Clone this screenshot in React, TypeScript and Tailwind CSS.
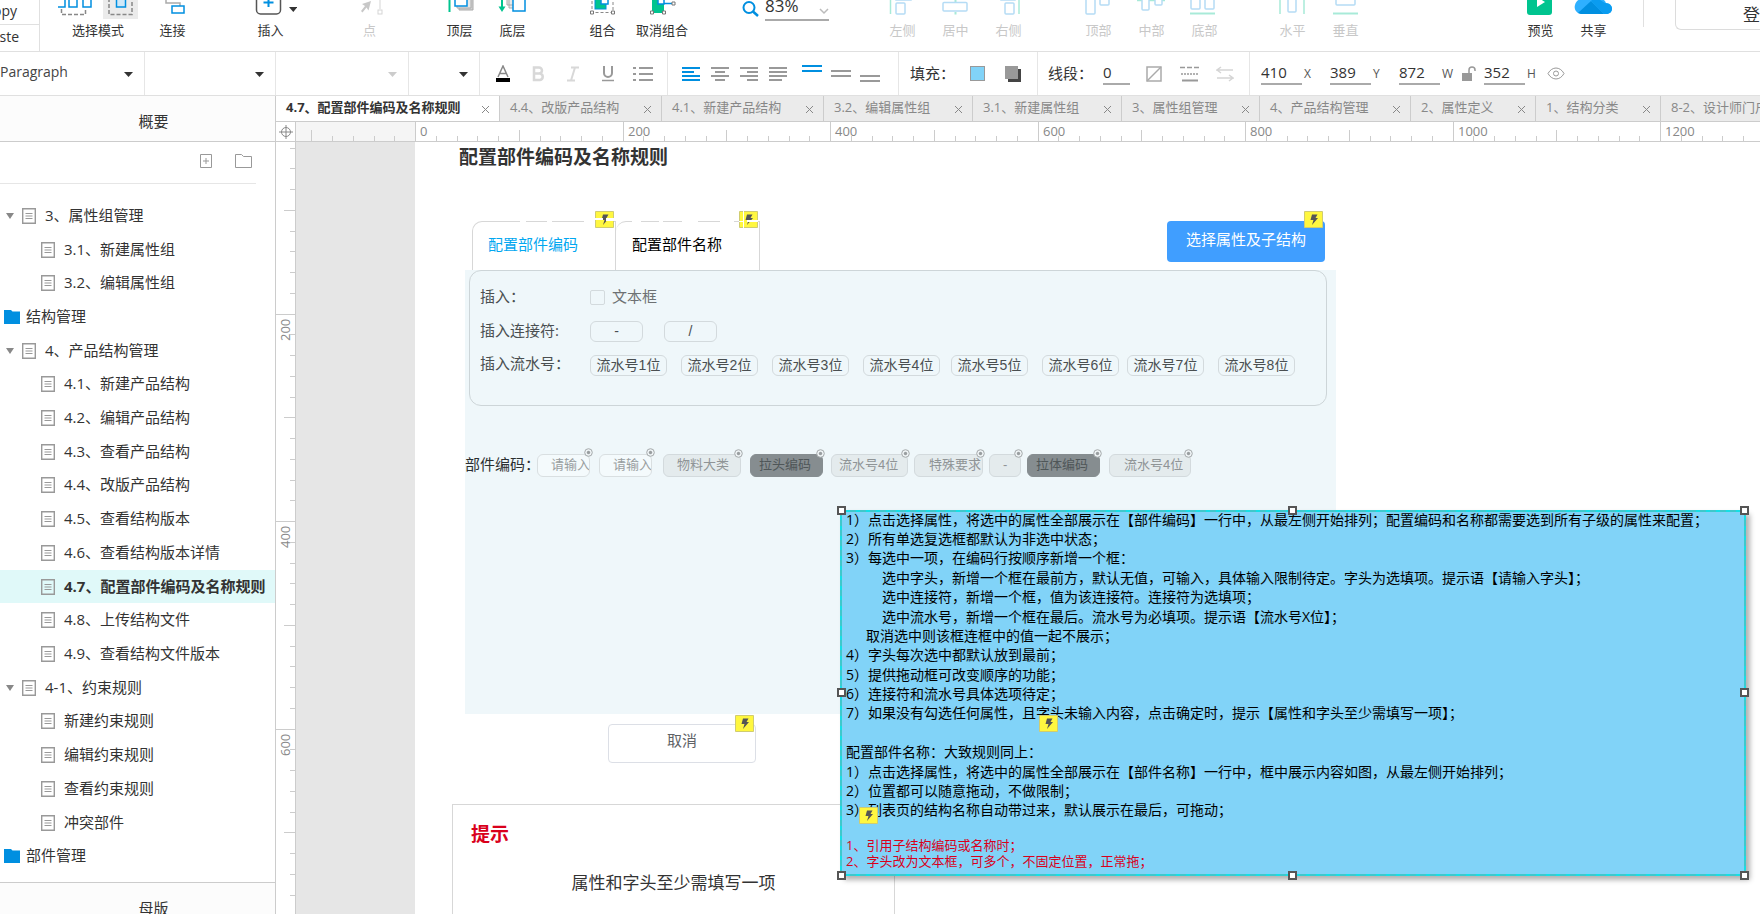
import type { ReactNode } from "react"
import { clsx } from "clsx"

type TreeItem = {
  label: string
  kind: "folder" | "parent" | "page"
  active?: boolean
}

const tree: TreeItem[] = [
  { label: "3、属性组管理", kind: "parent" },
  { label: "3.1、新建属性组", kind: "page" },
  { label: "3.2、编辑属性组", kind: "page" },
  { label: "结构管理", kind: "folder" },
  { label: "4、产品结构管理", kind: "parent" },
  { label: "4.1、新建产品结构", kind: "page" },
  { label: "4.2、编辑产品结构", kind: "page" },
  { label: "4.3、查看产品结构", kind: "page" },
  { label: "4.4、改版产品结构", kind: "page" },
  { label: "4.5、查看结构版本", kind: "page" },
  { label: "4.6、查看结构版本详情", kind: "page" },
  { label: "4.7、配置部件编码及名称规则", kind: "page", active: true },
  { label: "4.8、上传结构文件", kind: "page" },
  { label: "4.9、查看结构文件版本", kind: "page" },
  { label: "4-1、约束规则", kind: "parent" },
  { label: "新建约束规则", kind: "page" },
  { label: "编辑约束规则", kind: "page" },
  { label: "查看约束规则", kind: "page" },
  { label: "冲突部件", kind: "page" },
  { label: "部件管理", kind: "folder" },
]

const tabs = [
  { label: "4.7、配置部件编码及名称规则", width: "w-[224px]", active: true },
  { label: "4.4、改版产品结构", width: "w-[162px]" },
  { label: "4.1、新建产品结构", width: "w-[162px]" },
  { label: "3.2、编辑属性组", width: "w-[149px]" },
  { label: "3.1、新建属性组", width: "w-[149px]" },
  { label: "3、属性组管理", width: "w-[138px]" },
  { label: "4、产品结构管理", width: "w-[151px]" },
  { label: "2、属性定义", width: "w-[125px]" },
  { label: "1、结构分类", width: "w-[125px]" },
  { label: "8-2、设计师门户", width: "w-[175px]" },
]

const serials = [
  { label: "流水号1位", gap: "" },
  { label: "流水号2位", gap: "ml-[14px]" },
  { label: "流水号3位", gap: "ml-[14px]" },
  { label: "流水号4位", gap: "ml-[14px]" },
  { label: "流水号5位", gap: "ml-[11px]" },
  { label: "流水号6位", gap: "ml-[14px]" },
  { label: "流水号7位", gap: "ml-[8px]" },
  { label: "流水号8位", gap: "ml-[14px]" },
]

const chips = [
  { label: "物料大类", box: "ml-[11px] w-[78px] pl-[13px]" },
  { label: "拉头编码", box: "ml-[9px] w-[73px] pl-[8px]", dark: true },
  { label: "流水号4位", box: "ml-[8px] w-[77px] pl-[7px]" },
  { label: "特殊要求", box: "ml-[6px] w-[69px] pl-[14px]" },
  { label: "-", box: "ml-[6px] w-[32px] pl-[13px]" },
  { label: "拉体编码", box: "ml-[6px] w-[73px] pl-[8px]", dark: true },
  { label: "流水号4位", box: "ml-[9px] w-[82px] pl-[14px]" },
]

const noteLines = [
  { text: "1）点击选择属性，将选中的属性全部展示在【部件编码】一行中，从最左侧开始排列；配置编码和名称都需要选到所有子级的属性来配置；" },
  { text: "2）所有单选复选框都默认为非选中状态；" },
  { text: "3）每选中一项，在编码行按顺序新增一个框：" },
  { text: "选中字头，新增一个框在最前方，默认无值，可输入，具体输入限制待定。字头为选填项。提示语【请输入字头】；", indent: "pl-9" },
  { text: "选中连接符，新增一个框，值为该连接符。连接符为选填项；", indent: "pl-9" },
  { text: "选中流水号，新增一个框在最后。流水号为必填项。提示语【流水号X位】；", indent: "pl-9" },
  { text: "取消选中则该框连框中的值一起不展示；", indent: "pl-5" },
  { text: "4）字头每次选中都默认放到最前；" },
  { text: "5）提供拖动框可改变顺序的功能；" },
  { text: "6）连接符和流水号具体选项待定；" },
  { text: "7）如果没有勾选任何属性，且字头未输入内容，点击确定时，提示【属性和字头至少需填写一项】；" },
  { text: "" },
  { text: "配置部件名称：大致规则同上：" },
  { text: "1）点击选择属性，将选中的属性全部展示在【部件名称】一行中，框中展示内容如图，从最左侧开始排列；" },
  { text: "2）位置都可以随意拖动，不做限制；" },
  { text: "3）列表页的结构名称自动带过来，默认展示在最后，可拖动；" },
]

const handles = [
  "-left-[3px] -top-[4px]",
  "left-1/2 -ml-[5px] -top-[4px]",
  "-right-[3px] -top-[4px]",
  "-left-[3px] top-1/2 -mt-[5px]",
  "-right-[3px] top-1/2 -mt-[5px]",
  "-left-[3px] -bottom-[4px]",
  "left-1/2 -ml-[5px] -bottom-[4px]",
  "-right-[3px] -bottom-[4px]",
]

// one tick every 20 units at 83% zoom
const TICK = 20.75

function Tool({ label, muted, className = "w-[53px]", vw = 53, children }: {
  label: string
  muted?: boolean
  className?: string
  vw?: number
  children: ReactNode
}) {
  return (
    <button className={clsx("flex shrink-0 flex-col items-center", className)}>
      <svg width={vw} height="19" viewBox={`0 0 ${vw} 19`} fill="none">
        {children}
      </svg>
      <span className={clsx("mt-px whitespace-nowrap text-[13px] leading-5", muted ? "text-[#c8c8c8]" : "text-[#333]")}>
        {label}
      </span>
    </button>
  )
}

function TopToolbar() {
  return (
    <header className="flex h-[52px] shrink-0 overflow-hidden border-b border-[#e0e0e0] bg-white">
      <div className="flex w-10 shrink-0 flex-col border-r border-[#e0e0e0] text-[14px] text-[#333]">
        <button className="flex h-[25px] justify-end border-b border-[#e0e0e0] pr-[22px] leading-[22px]">Copy</button>
        <button className="flex h-[26px] justify-end pr-5 leading-[24px]">Paste</button>
      </div>
      <Tool label="选择模式" className="ml-[18px] w-20" vw={80}>
        <rect x="45" y="-2" width="35" height="21" fill="#ebebeb" />
        <path d="M-1 -4h8v11h-8zM11 -4h8v11h-8zM25 -4h8v11h-8z" stroke="#008fe0" strokeWidth="1.5" />
        <path d="M3.5 9v5.5h24V9" stroke="#888" strokeWidth="1.5" strokeDasharray="4 2" />
        <path d="M58.5 -4h9v11h-9z" stroke="#008fe0" strokeWidth="1.5" fill="#cfe8f8" />
        <path d="M51 -2v16.500h23V-2" stroke="#888" strokeWidth="1.500" strokeDasharray="4 2" />
      </Tool>
      <Tool label="连接" className="ml-2 w-[53px]">
        <path d="M20 -2v5h14v3" stroke="#aaa" strokeWidth="1.500" />
        <rect x="26" y="6" width="12" height="7" stroke="#008fe0" strokeWidth="1.500" />
      </Tool>
      <Tool label="插入" className="ml-[45px] w-[53px]">
        <rect x="12.500" y="-10" width="24" height="24" rx="4" stroke="#555" strokeWidth="1.500" />
        <path d="M24.500 -4v11M19.500 2.500h10" stroke="#008fe0" strokeWidth="2" />
        <path d="M45 7h8.500l-4.200 5z" fill="#333" />
      </Tool>
      <Tool label="点" muted className="ml-[46px] w-[53px]">
        <path d="M28 1l-9 3 3 2-4 5 1.500 1.500 4-5 2 3z" fill="#c8c8c8" />
        <path d="M37 -2v11" stroke="#d5d5d5" />
        <rect x="35" y="10" width="4" height="4" stroke="#d5d5d5" />
      </Tool>
      <Tool label="顶层" className="ml-[37px] w-[53px]">
        <path d="M16.500 0v12" stroke="#00c48f" strokeWidth="2" />
        <path d="M26 -3h14v13H26z" fill="#d0d0d0" stroke="#aaa" />
        <path d="M24 -3h14v11H24z" fill="#e8e8e8" stroke="#aaa" />
        <rect x="22" y="-6" width="12" height="12" fill="#fff" stroke="#008fe0" strokeWidth="1.500" />
      </Tool>
      <Tool label="底层">
        <path d="M16 0v9" stroke="#00c48f" strokeWidth="2" />
        <path d="M12.500 6.500h7L16 12z" fill="#00c48f" />
        <path d="M21 -3h8v8h-8zM23 -3h8v11h-8z" fill="#e8e8e8" stroke="#aaa" />
        <rect x="27" y="-2" width="12" height="13" fill="#fff" stroke="#008fe0" strokeWidth="1.500" />
      </Tool>
      <Tool label="组合" className="ml-[37px] w-[53px]">
        <path d="M16 -4v16.500h21V-4" stroke="#888" strokeDasharray="3 2" />
        <rect x="19" y="-2" width="11" height="11" fill="#00c48f" stroke="#008fe0" />
        <rect x="25" y="-3" width="7" height="7" fill="#fff" stroke="#008fe0" strokeWidth="1.500" />
        <path d="M14.500 11h3v3h-3zM35.500 11h3v3h-3z" fill="#fff" stroke="#777" />
      </Tool>
      <Tool label="取消组合" className="ml-[3px] w-[60px]" vw={60}>
        <rect x="20" y="-3" width="12" height="16" fill="#00c48f" />
        <path d="M26 -2h6v6h-6zM32 3.500h9" fill="#fff" stroke="#008fe0" strokeWidth="1.500" />
        <path d="M18.500 11h3v3h-3zM30.500 11h3v3h-3zM40 2h3v3h-3z" fill="#fff" stroke="#777" />
      </Tool>
      <div className="ml-[50px] flex w-[87px] shrink-0 items-start">
        <svg width="23" height="20" viewBox="0 0 23 20" fill="none">
          <circle cx="7" cy="7.500" r="5.500" stroke="#008fe0" strokeWidth="2" />
          <path d="M11 11.500l5 4.500" stroke="#008fe0" strokeWidth="2.500" />
        </svg>
        <div className="relative -mt-[6px] w-16">
          <input aria-label="缩放" defaultValue="83%" className="h-[27px] w-full border-b-2 border-[#aaa] bg-transparent pb-[2px] text-[17px] leading-6 text-[#333] outline-none" />
          <svg className="absolute right-0 top-[14px]" width="10" height="7" fill="none">
            <path d="M1 1l4 4 4-4" stroke="#bbb" strokeWidth="1.500" />
          </svg>
        </div>
      </div>
      <Tool label="左侧" muted className="ml-[47px] w-[53px]">
        <path d="M14.500 0v14" stroke="#a8ead8" strokeWidth="1.500" />
        <path d="M20 -6h15v6H20z" stroke="#b5dcf5" strokeWidth="1.500" />
        <rect x="20" y="3" width="9" height="11" rx="1" stroke="#b5dcf5" strokeWidth="1.500" />
      </Tool>
      <Tool label="居中" muted>
        <path d="M26.500 -2v4M26.500 12v2.500" stroke="#a8ead8" strokeWidth="2" />
        <rect x="14" y="2.500" width="24" height="8.500" rx="1" stroke="#b5dcf5" strokeWidth="1.500" />
      </Tool>
      <Tool label="右侧" muted>
        <path d="M37 0v14" stroke="#a8ead8" strokeWidth="1.500" />
        <path d="M19 -6h14v6H19z" stroke="#b5dcf5" strokeWidth="1.500" />
        <rect x="23" y="3" width="9" height="11" rx="1" stroke="#b5dcf5" strokeWidth="1.500" />
      </Tool>
      <Tool label="顶部" muted className="ml-[37px] w-[53px]">
        <rect x="14" y="-6" width="9" height="20" rx="1" stroke="#b5dcf5" strokeWidth="1.500" />
        <rect x="28" y="-6" width="9" height="11" rx="1" stroke="#b5dcf5" strokeWidth="1.500" />
      </Tool>
      <Tool label="中部" muted>
        <path d="M12 .5h28" stroke="#a8ead8" strokeWidth="1.500" />
        <rect x="17" y="-6" width="7" height="16" rx="1" fill="#fff" stroke="#b5dcf5" strokeWidth="1.500" />
        <rect x="30" y="-6" width="7" height="11" rx="1" fill="#fff" stroke="#b5dcf5" strokeWidth="1.500" />
      </Tool>
      <Tool label="底部" muted>
        <path d="M12 13.500h25" stroke="#a8ead8" strokeWidth="2" />
        <rect x="13" y="-6" width="9" height="15" rx="1" stroke="#b5dcf5" strokeWidth="1.500" />
        <rect x="27" y="-6" width="9" height="15" rx="1" stroke="#b5dcf5" strokeWidth="1.500" />
      </Tool>
      <Tool label="水平" muted className="ml-[35px] w-[53px]">
        <path d="M14 0v14M38 0v14" stroke="#a8ead8" strokeWidth="1.500" />
        <rect x="22" y="-6" width="8" height="18" rx="1" stroke="#b5dcf5" strokeWidth="1.500" />
      </Tool>
      <Tool label="垂直" muted>
        <path d="M14 13.500h25" stroke="#a8ead8" strokeWidth="2" />
        <rect x="17" y="-4" width="19" height="9" rx="1" stroke="#b5dcf5" strokeWidth="1.500" />
      </Tool>
      <div className="ml-auto flex">
        <Tool label="预览">
          <rect x="13" y="-8" width="25" height="23" rx="3" fill="#00c48f" />
          <path d="M23 -3v10l8-5z" fill="#fff" />
        </Tool>
        <Tool label="共享">
          <path d="M14 14a7 7 0 0 1-6-9c1-4 4-6 7-6h19c3 0 4 2 5 4 4 0 6 3 6 5.500 0 3-2 5.500-6 5.500z" fill="#2eb0ff" />
          <path d="M11 13L24 1l13 13H14z" fill="#008fe0" />
          <path d="M24 1l4-4 10 6c4 0 7 3 7 5.500 0 3-2 5.500-6 5.500h-2z" fill="#0a9cf0" />
        </Tool>
        <div className="ml-[23px] h-[27px] w-px bg-[#e0e0e0]" />
        <button className="ml-[31px] h-[30px] w-[85px] overflow-hidden whitespace-nowrap rounded-bl-md border-b border-l border-[#dcdcdc] pl-[67px] text-left text-[17px] leading-[24px] text-[#333]">
          登录
        </button>
      </div>
    </header>
  )
}

function PickBox({ label, value, muted, className }: { label: string; value: string; muted?: boolean; className: string }) {
  return (
    <div className={clsx("relative shrink-0 border-r border-[#e6e6e6]", className)}>
      <select aria-label={label} className="h-full w-full appearance-none bg-transparent pb-[5px] text-[14px] text-[#444] outline-none">
        <option>{value}</option>
      </select>
      <svg className="absolute right-[11px] top-[20px]" width="9" height="5">
        <path d="M0 0h9L4.500 5z" fill={muted ? "#ccc" : "#333"} />
      </svg>
    </div>
  )
}

function IconButton({ label, className, children }: { label: string; className: string; children: ReactNode }) {
  return (
    <button aria-label={label} className={clsx("flex h-6 shrink-0 items-center justify-center", className)}>
      {children}
    </button>
  )
}

function Lines({ d, on }: { d: string; on?: boolean }) {
  return (
    <svg width="20" height="18" fill="none">
      <path d={d} stroke={on ? "#008fe0" : "#999"} strokeWidth="2" />
    </svg>
  )
}

function NumberBox({ label, value, gap }: { label: string; value: string; gap: string }) {
  return (
    <label className={clsx("flex shrink-0 items-center text-[12px] text-[#555]", gap)}>
      <input defaultValue={value} className="mr-[2px] h-[23px] w-[41px] border-b-2 border-[#aaa] bg-transparent pb-[2px] text-[15px] text-[#333] outline-none" />
      {label}
    </label>
  )
}

function StyleToolbar() {
  return (
    <div className="flex h-11 shrink-0 overflow-hidden border-b border-[#e0e0e0] bg-white">
      <PickBox label="样式" value="Paragraph" className="w-[145px]" />
      <PickBox label="字体" value="" className="w-[131px]" />
      <PickBox label="字重" value="" muted className="w-[133px]" />
      <PickBox label="字号" value="" className="w-[71px]" />
      <div className="flex w-[188px] shrink-0 items-center border-r border-[#e6e6e6] pl-[5px]">
        <IconButton label="颜色" className="w-[35px]">
          <svg width="16" height="18" fill="none">
            <path d="M3 12L8 1l5 11M5 8.500h6" stroke="#888" strokeWidth="1.500" />
            <path d="M1 13h14v4H1z" fill="#000" />
          </svg>
        </IconButton>
        <IconButton label="粗体" className="w-[35px]">
          <svg width="14" height="16" fill="none">
            <path d="M3 1.500h5a3 3 0 0 1 0 6H3zM3 7.500h6a3.300 3.300 0 0 1 0 6.500H3z" stroke="#d8d8d8" strokeWidth="2.500" />
          </svg>
        </IconButton>
        <IconButton label="斜体" className="w-[35px]">
          <svg width="14" height="16" fill="none">
            <path d="M5 1.500h8M1 14.500h8M9 1.500L5 14.500" stroke="#d8d8d8" strokeWidth="2" />
          </svg>
        </IconButton>
        <IconButton label="下划线" className="w-[35px]">
          <svg width="14" height="16" fill="none">
            <path d="M3 0v7a4 4 0 0 0 8 0V0" stroke="#999" strokeWidth="2" />
            <path d="M1 14.500h12" stroke="#999" strokeWidth="1.500" />
          </svg>
        </IconButton>
        <IconButton label="列表" className="w-[35px]">
          <Lines d="M6 3h14M6 9h14M6 15h14M0 3h3M0 9h3M0 15h3" />
        </IconButton>
      </div>
      <div className="flex w-[231px] shrink-0 items-center border-r border-[#e6e6e6] pl-2">
        <IconButton label="左对齐" className="w-[29px]"><Lines on d="M1 3h18M1 7h12M1 11h18M1 15h18" /></IconButton>
        <IconButton label="居中" className="w-[29px]"><Lines d="M1 3h18M5 7h10M1 11h18M5 15h10" /></IconButton>
        <IconButton label="右对齐" className="w-[29px]"><Lines d="M1 3h18M8 7h11M1 11h18M8 15h11" /></IconButton>
        <IconButton label="两端对齐" className="w-[29px]"><Lines d="M1 3h18M1 7h18M1 11h18M1 15h13" /></IconButton>
        <IconButton label="顶端" className="ml-[5px] w-[29px]"><Lines on d="M0 1h20M0 6h20" /></IconButton>
        <IconButton label="中间" className="w-[29px]"><Lines d="M0 6h20M0 11h20" /></IconButton>
        <IconButton label="底端" className="w-[29px]"><Lines d="M0 11h20M0 16h20" /></IconButton>
      </div>
      <div className="flex w-[139px] shrink-0 items-center border-r border-[#e6e6e6] pl-[11px] text-[15px] text-[#333]">
        填充：
        <IconButton label="填充颜色" className="ml-[15px] w-[15px]">
          <span className="size-[15px] border border-[#999] bg-[#81d3f8]" />
        </IconButton>
        <IconButton label="阴影" className="ml-5 w-4">
          <svg width="16" height="16">
            <path d="M3 3h13v13H3z" fill="#444" />
            <path d="M0 0h13v13H0z" fill="#999" />
          </svg>
        </IconButton>
      </div>
      <div className="flex w-[212px] shrink-0 items-center border-r border-[#e6e6e6] pl-[10px]">
        <label htmlFor="stroke" className="w-[55px] text-[15px] text-[#333]">线段：</label>
        <input id="stroke" defaultValue="0" className="h-[23px] w-[27px] border-b-2 border-[#aaa] bg-transparent pb-[2px] text-[15px] text-[#333] outline-none" />
        <IconButton label="线条颜色" className="ml-4 w-4">
          <svg width="16" height="16" fill="none" stroke="#aaa">
            <path d="M1 1h14v14H1z" strokeWidth="1.500" />
            <path d="M1 15L15 1" strokeWidth="1.500" />
          </svg>
        </IconButton>
        <IconButton label="线型" className="ml-[18px] w-5">
          <svg width="20" height="16" fill="none" stroke="#999">
            <path d="M0 1.500h20" strokeWidth="1.500" strokeDasharray="5 2" />
            <path d="M1 8h18" strokeDasharray="2 1" strokeWidth="1.500" />
            <path d="M2 14.500h16" strokeWidth="2" />
          </svg>
        </IconButton>
        <IconButton label="箭头" className="ml-4 w-[18px]">
          <svg width="18" height="16" fill="none" stroke="#d5d5d5" strokeWidth="1.500">
            <path d="M17 4H1l4-3M1 4l4 3M1 12h16l-4-3M17 12l-4 3" />
          </svg>
        </IconButton>
      </div>
      <div className="flex items-center pl-[11px]">
        <NumberBox label="X" value="410" gap="w-[69px]" />
        <NumberBox label="Y" value="389" gap="w-[69px]" />
        <NumberBox label="W" value="872" gap="w-[61px]" />
        <IconButton label="锁定比例" className="ml-px w-[15px]">
          <svg width="14" height="16" fill="none">
            <path d="M0 7h10v8H0z" fill="#999" />
            <path d="M7 7V4a3 3 0 0 1 6 0v1" stroke="#999" strokeWidth="1.500" />
          </svg>
        </IconButton>
        <NumberBox label="H" value="352" gap="ml-2 w-[63px]" />
        <IconButton label="隐藏" className="w-[18px]">
          <svg width="18" height="13" fill="none" stroke="#999">
            <path d="M1 6.500C5-.8 13-.8 17 6.500c-4 7.300-12 7.300-16 0z" />
            <circle cx="9" cy="6.500" r="2.500" />
          </svg>
        </IconButton>
      </div>
    </div>
  )
}

function PageIcon() {
  return (
    <svg width="14" height="16" fill="none" stroke="#999" className="shrink-0">
      <path d="M.7.700h12.600v14.600H.7z" strokeWidth="1.400" />
      <path d="M3.500 5.500h7M3.500 8h7M3.500 10.500h7" />
    </svg>
  )
}

function TreeRow({ item }: { item: TreeItem }) {
  return (
    <li className="flex flex-1">
      <a
        href="#"
        className={clsx(
          "flex w-full items-center whitespace-nowrap text-[15px] leading-5 text-[#333]",
          item.kind === "folder" && "pl-1",
          item.kind === "parent" && "pl-[6px]",
          item.kind === "page" && "pl-[41px]",
          item.active && "bg-[#e0f9f9] font-bold",
        )}
      >
        {item.kind === "folder" && (
          <svg width="16" height="14" className="mr-[6px]">
            <path d="M0 0h7l1.500 1.500H16V14H0z" fill="#008fe0" />
          </svg>
        )}
        {item.kind === "parent" && (
          <svg width="8" height="6" className="mr-2">
            <path d="M0 0h8L4 6z" fill="#888" />
          </svg>
        )}
        {item.kind !== "folder" && <PageIcon />}
        <span className={clsx("pb-[2px]", item.kind !== "folder" && "ml-[9px]")}>{item.label}</span>
      </a>
    </li>
  )
}

function Sidebar() {
  return (
    <aside className="flex w-[276px] shrink-0 flex-col border-r border-[#ccc] bg-white">
      <h2 className="flex h-[46px] shrink-0 items-center justify-center border-b border-[#ccc] bg-[#fcfcfc] pl-8 pt-[5px] text-[15px] text-[#333]">
        概要
      </h2>
      <div className="mr-[19px] flex h-[42px] shrink-0 items-start justify-end gap-[23px] border-b border-[#e6e6e6] pr-1 pt-3">
        <button aria-label="添加页面">
          <svg width="12" height="15" fill="none" stroke="#999">
            <path d="M.5.500h11v13H.5zM6 4v6M3 7h6" />
          </svg>
        </button>
        <button aria-label="添加文件夹">
          <svg width="17" height="15" fill="none" stroke="#999">
            <path d="M.5.500h6l2 2h8v11H.5z" />
          </svg>
        </button>
      </div>
      <ul className="flex flex-1 flex-col pb-[9px] pt-[15px]">
        {tree.map((item) => (
          <TreeRow key={item.label} item={item} />
        ))}
      </ul>
      <h2 className="h-8 shrink-0 overflow-hidden border-t border-[#ccc] bg-[#fcfcfc] pl-8 pt-[14px] text-center text-[15px] leading-[22px] text-[#333]">
        母版
      </h2>
    </aside>
  )
}

function TabBar() {
  return (
    <div className="flex h-[26px] shrink-0 overflow-hidden border-b border-[#ccc] bg-[#ebebeb]">
      {tabs.map((tab) => (
        <div
          key={tab.label}
          className={clsx(
            "flex shrink-0 items-center justify-between whitespace-nowrap border-r border-[#ccc] pl-[10px] pr-[9px] text-[13px] leading-5",
            tab.width,
            tab.active ? "bg-white font-bold text-[#333]" : "text-[#888]",
          )}
        >
          <button className="pb-1">{tab.label}</button>
          <button aria-label="关闭">
            <svg width="9" height="9" fill="none" className="mt-[2px]">
              <path d="M1 1l7 7M8 1L1 8" stroke="#888" />
            </svg>
          </button>
        </div>
      ))}
    </div>
  )
}

function TopRuler() {
  const ticks = Array.from({ length: 80 }, (_, i) => i - 5)
  return (
    <div className="flex h-5 shrink-0 overflow-hidden border-b border-[#ccc]">
      <div className="flex w-5 shrink-0 items-center justify-center border-r border-[#ccc] bg-white">
        <svg width="14" height="14" fill="none" stroke="#888">
          <circle cx="7" cy="7" r="4.500" />
          <path d="M7 0v14M0 7h14" />
        </svg>
      </div>
      <div className="w-[119px] shrink-0 bg-[#f5f5f5]" />
      <svg className="-ml-[119px] h-[19px] flex-1" fontSize="13" fill="#888">
        {ticks.map((i) => {
          const x = Math.round(119 + i * TICK)
          const top = i % 10 === 0 ? 0 : i % 5 === 0 ? 8 : 14
          return (
            <g key={i}>
              <rect x={x} y={top} width="1" height={19 - top} fill="#ccc" />
              {i % 10 === 0 && <text x={x + 5} y="14">{i * 20}</text>}
            </g>
          )
        })}
      </svg>
    </div>
  )
}

function SideRuler() {
  const ticks = Array.from({ length: 40 }, (_, i) => i + 2)
  return (
    <svg className="h-full w-5 shrink-0 border-r border-[#ccc] bg-white" fontSize="13" fill="#888">
      {ticks.map((i) => {
        const y = Math.round(i * TICK) - 36
        const left = i % 10 === 0 ? 0 : i % 5 === 0 ? 8 : 14
        return (
          <g key={i}>
            <rect x={left} y={y} width={19 - left} height="1" fill="#ccc" />
            {i % 10 === 0 && (
              <text transform={`translate(14 ${y + 27}) rotate(-90)`}>{i * 20}</text>
            )}
          </g>
        )
      })}
    </svg>
  )
}

function Bolt({ className, cut }: { className: string; cut?: string }) {
  return (
    <svg width="19" height="17" className={clsx("absolute", className)}>
      <path d="M.5.500h18v16H.5z" fill="#fff73f" stroke="#d0cc70" />
      <path d="M8 3.500h5.500l-2 3.500H14l-6 7 1.500-5H6.500z" fill="#555" />
      {cut && <path d={cut} fill="#fff" />}
    </svg>
  )
}

function CloseDot() {
  return (
    <svg width="9" height="9" className="absolute -right-[3px] -top-[6px]" fill="none">
      <circle cx="4.500" cy="4.500" r="3.800" fill="#eef3f5" stroke="#a5aaac" />
      <circle cx="4.500" cy="4.500" r="1.700" fill="#999ea0" />
    </svg>
  )
}

function ConfigPanel() {
  const small = "h-[21px] shrink-0 rounded-md border border-[#d3dadd] text-center font-['Liberation_Sans','Noto_Sans_CJK_SC',sans-serif] text-[14px] leading-[17px]"
  return (
    <div className="absolute left-[50px] top-[128px] h-[444px] w-[871px] bg-[#eff7fa] text-[15px] text-[#4a4f51]">
      <div className="ml-[4px] flex h-[136px] w-[858px] flex-col rounded-xl border border-[#cdd5d8] pl-[10px] pt-[9px]">
        <div className="flex h-[34px] items-center">
          <span className="w-[110px] pb-[2px]">插入：</span>
          <input id="textbox" type="checkbox" className="size-[15px] appearance-none rounded-[2px] border border-[#d3dadd]" />
          <label htmlFor="textbox" className="ml-[7px] pb-[2px] text-[#6d7173]">文本框</label>
        </div>
        <div className="flex h-[34px] items-center">
          <span className="w-[110px] pb-[2px]">插入连接符:</span>
          <button className={clsx(small, "w-[53px]")}>-</button>
          <button className={clsx(small, "ml-[21px] w-[53px]")}>/</button>
        </div>
        <div className="flex h-[34px] items-center">
          <span className="w-[110px] pb-1">插入流水号：</span>
          {serials.map((s) => (
            <button key={s.label} className={clsx(small, "w-[77px]", s.gap)}>{s.label}</button>
          ))}
        </div>
      </div>
      <div className="mt-[47px] flex items-center whitespace-nowrap">
        <span className="w-[72px] shrink-0 pb-[2px] text-[#2b2f31]">部件编码：</span>
        {["", "ml-[9px]"].map((gap) => (
          <div key={gap} className={clsx("relative", gap)}>
            <input aria-label="字头" placeholder="请输入" className="block h-[23px] w-[53px] rounded-md border border-[#d9dfe1] bg-[#f4fafc] pb-[3px] pl-[13px] text-[13px] placeholder:text-[#999ea0]" />
            <CloseDot />
          </div>
        ))}
        {chips.map((chip, i) => (
          <div
            key={i}
            className={clsx(
              "relative h-[23px] shrink-0 rounded-md border font-['Liberation_Sans','Noto_Sans_CJK_SC',sans-serif] text-[13px] leading-5",
              chip.box,
              chip.dark ? "border-[#868d90] bg-[#868d90] text-[#4f5658]" : "border-[#d3dadd] bg-[#e4ebed] text-[#8f9496]",
            )}
          >
            {chip.label}
            <CloseDot />
          </div>
        ))}
      </div>
    </div>
  )
}

function Note() {
  return (
    <div className="absolute left-[425px] top-[368px] h-[366px] w-[906px] whitespace-nowrap bg-[#81d3f8] pl-[6px] text-black shadow-[4px_4px_5px_rgba(0,0,0,0.3)]">
      <div className="absolute inset-0 border-2 border-[#14dfe6]" />
      <div className="absolute inset-0 border-2 border-dashed border-[#3fc8cc]" />
      <div className="relative flex h-[310px] flex-col text-[14px] leading-4">
        {noteLines.map((line, i) => (
          <p key={i} className={clsx("flex min-h-0 flex-1 items-center", line.indent)}>{line.text}</p>
        ))}
      </div>
      <div className="relative mt-[17px] text-[13px] leading-4 text-[#d9001b]">
        <p>1、引用子结构编码或名称时；</p>
        <p>2、字头改为文本框，可多个，不固定位置，正常拖；</p>
      </div>
      {handles.map((pos) => (
        <span key={pos} className={clsx("absolute size-[9px] border-2 border-[#555] bg-white", pos)} />
      ))}
      <Bolt className="left-[199px] top-[205px]" />
      <Bolt className="left-[19px] top-[297px]" />
    </div>
  )
}

function Canvas() {
  return (
    <div className="flex min-h-0 flex-1">
      <SideRuler />
      <div className="w-[119px] shrink-0 bg-[#e6e6e6]" />
      <div className="relative flex-1 overflow-hidden bg-white">
        <h1 className="absolute left-[44px] top-px whitespace-nowrap text-[19px] font-bold leading-7 text-[#333]">
          配置部件编码及名称规则
        </h1>
        <div className="absolute left-[57px] top-[79px] flex h-[49px] text-[15px] leading-[43px]">
          <button className="w-[144px] rounded-tl-[10px] border border-b-0 border-[#d7d7d7] pb-[3px] pl-[15px] text-left text-[#02a7f0]">配置部件编码</button>
          <button className="w-[144px] rounded-tl-[10px] border-r border-t border-[#d7d7d7] pb-[3px] pl-4 text-left text-black">配置部件名称</button>
        </div>
        <svg className="absolute left-[57px] top-[79px]" width="290" height="1" fill="#fff">
          <path d="M48 0h6v1h-6zM75 0h5v1h-5zM112 0h12v1h-12zM160 0h9v1h-9zM187 0h4v1h-4zM210 0h16v1h-16zM248 0h14v1h-14z" />
        </svg>
        <Bolt className="left-[180px] top-[69px]" cut="M0 7h8v2H0zM11 7h8v3h-8z" />
        <Bolt className="left-[324px] top-[69px]" cut="M4 0h1v17H4zM0 10h5v1H0zM8 9h11v2H8z" />
        <button className="absolute left-[752px] top-[79px] h-[41px] w-[158px] rounded bg-[#409eff] pb-1 text-[15px] leading-[37px] text-white">
          选择属性及子结构
        </button>
        <Bolt className="left-[889px] top-[69px]" />
        <ConfigPanel />
        <button className="absolute left-[193px] top-[582px] h-[39px] w-[148px] rounded border border-[#dcdfe6] bg-white pb-[6px] text-[15px] leading-[31px] text-[#606266]">
          取消
        </button>
        <Bolt className="left-[320px] top-[573px]" />
        <section className="absolute left-[37px] top-[662px] h-[200px] w-[443px] border border-[#d7d7d7] bg-white">
          <h3 className="pl-[18px] pt-[15px] text-[19px] font-bold leading-7 text-[#d9001b]">提示</h3>
          <p className="mt-[21px] text-center text-[17px] leading-7 text-[#333]">属性和字头至少需填写一项</p>
        </section>
        <Note />
      </div>
    </div>
  )
}

export default function App() {
  return (
    <div className="flex h-screen flex-col overflow-hidden bg-white font-['Open_Sans','Noto_Sans_CJK_SC',sans-serif]">
      <TopToolbar />
      <StyleToolbar />
      <div className="flex min-h-0 flex-1">
        <Sidebar />
        <main className="flex min-w-0 flex-1 flex-col">
          <TabBar />
          <TopRuler />
          <Canvas />
        </main>
      </div>
    </div>
  )
}
